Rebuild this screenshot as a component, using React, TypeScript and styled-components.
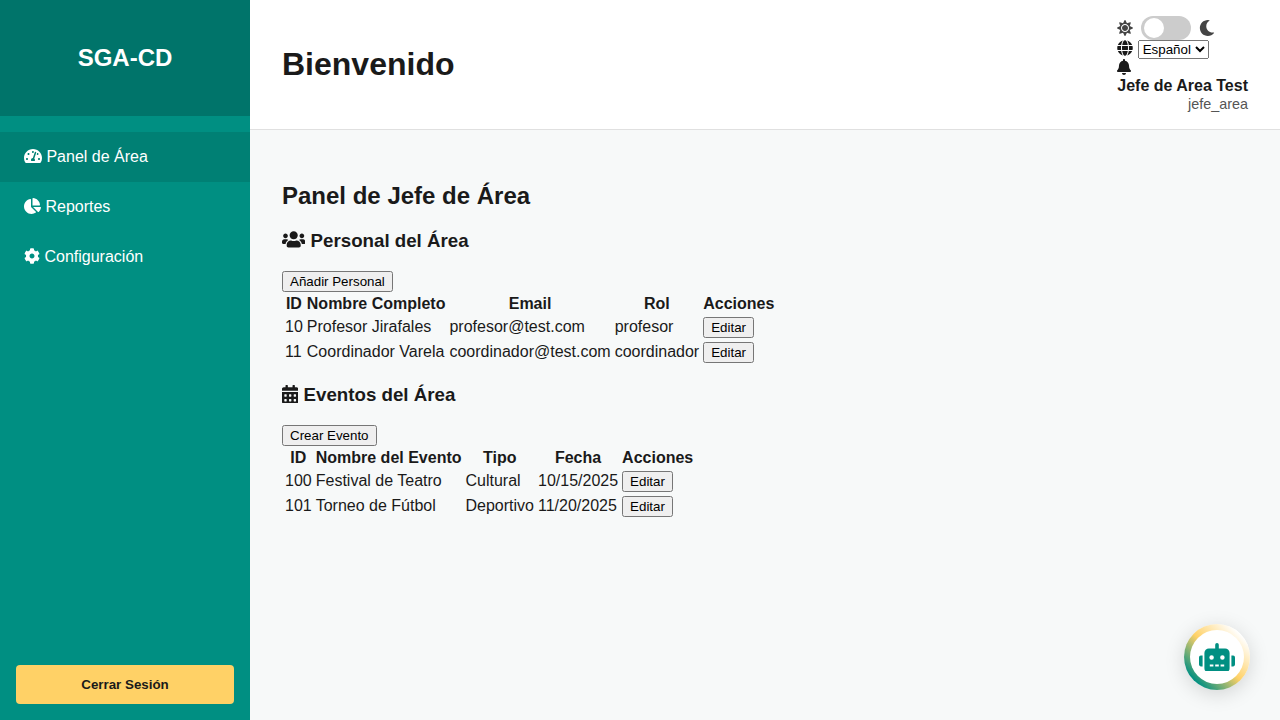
import React from 'react';
import styled, { createGlobalStyle } from 'styled-components';
import {
  FaBell,
  FaCalendarAlt,
  FaChartPie,
  FaCog,
  FaGlobe,
  FaMoon,
  FaRobot,
  FaSun,
  FaTachometerAlt,
  FaUsers,
} from 'react-icons/fa';

const GlobalStyle = createGlobalStyle`
  html, body {
    margin: 0;
    padding: 0;
    height: 100%;
  }
  body {
    font-family: "Liberation Sans", Arial, sans-serif;
    color: #1a1a1a;
    background: #f7f9f9;
  }
`;

// react-icons draws every icon 1em square, these keep the glyph's real width
const GaugeIcon = styled(FaTachometerAlt)`
  width: 1.125em;
`;
const PieIcon = styled(FaChartPie)`
  width: 1.0625em;
`;
const UsersIcon = styled(FaUsers)`
  width: 1.25em;
`;
const CalendarIcon = styled(FaCalendarAlt)`
  width: 0.875em;
`;
const BellIcon = styled(FaBell)`
  width: 0.875em;
`;
const RobotIcon = styled(FaRobot)`
  width: 1.25em;
`;

const Layout = styled.div`
  display: flex;
  height: 720px;
  overflow: hidden;
`;

const Sidebar = styled.aside`
  width: 250px;
  flex-shrink: 0;
  display: flex;
  flex-direction: column;
  background: #008f82;
  color: #fff;
`;

const Brand = styled.div`
  height: 116px;
  box-sizing: border-box;
  padding-top: 44px;
  text-align: center;
  font-size: 24px;
  line-height: 28px;
  font-weight: 700;
  background: #00746a;
`;

const Nav = styled.nav`
  flex: 1;
  padding-top: 16px;
`;

const NavItem = styled.a<{ $active?: boolean }>`
  display: block;
  height: 50px;
  padding-left: 24px;
  font-size: 16px;
  line-height: 50px;
  color: #fff;
  background: ${(p) => (p.$active ? 'rgba(0, 0, 0, 0.1)' : 'transparent')};
  svg {
    vertical-align: -2px;
  }
`;

const LogoutWrap = styled.div`
  padding: 0 16px 16px;
`;

const LogoutButton = styled.button`
  display: block;
  width: 100%;
  height: 39px;
  border: none;
  border-radius: 4px;
  background: #ffd166;
  color: #1a1a1a;
  font-family: inherit;
  font-size: 13.33px;
  font-weight: 700;
`;

const Content = styled.div`
  flex: 1;
  display: flex;
  flex-direction: column;
  min-width: 0;
`;

const Topbar = styled.header`
  height: 130px;
  box-sizing: border-box;
  display: flex;
  align-items: center;
  justify-content: space-between;
  padding: 0 32px;
  background: #fff;
  border-bottom: 1px solid #e0e0e0;
`;

const PageTitle = styled.h1`
  margin: 0;
  font-size: 32px;
  font-weight: 700;
`;

const UserArea = styled.div`
  display: flex;
  flex-direction: column;
`;

const ThemeRow = styled.div`
  display: flex;
  align-items: center;
  gap: 8px;
  height: 24px;
  font-size: 16px;
  color: #444;
`;

const Toggle = styled.span`
  display: block;
  width: 50px;
  height: 24px;
  border-radius: 12px;
  background: #ccc;
  position: relative;
  &::before {
    content: '';
    position: absolute;
    left: 3px;
    top: 2px;
    width: 20px;
    height: 20px;
    border-radius: 50%;
    background: #fff;
  }
`;

const LangRow = styled.div`
  height: 19px;
  font-size: 16px;
  line-height: 17px;
  white-space: nowrap;
  svg {
    vertical-align: -2px;
  }
`;

const BellRow = styled.div`
  height: 18px;
  font-size: 16px;
  line-height: 18px;
  svg {
    display: block;
  }
`;

const UserName = styled.div`
  font-weight: 700;
  font-size: 16px;
  line-height: 18px;
`;

const UserRole = styled.div`
  text-align: right;
  font-size: 14.4px;
  line-height: 18px;
  color: #555;
`;

const Main = styled.main`
  flex: 1;
  padding: 32px;
`;

const PanelTitle = styled.h2`
  margin: 19.92px 0;
  font-size: 24px;
`;

const SectionTitle = styled.h3`
  margin: 18.72px 0;
  font-size: 18.72px;
  svg {
    vertical-align: -2px;
  }
`;

const Section = styled.section``;

const Table = styled.table`
  font-size: 16px;
`;

const Cell = styled.td`
  vertical-align: middle;
`;

const Head = styled.th``;

function DataTable({
  columns,
  rows,
}: {
  columns: string[];
  rows: string[][];
}) {
  return (
    <Table>
      <thead>
        <tr>
          {columns.map((c) => (
            <Head key={c}>{c}</Head>
          ))}
        </tr>
      </thead>
      <tbody>
        {rows.map((row) => (
          <tr key={row[0]}>
            {row.map((v) => (
              <Cell key={v}>{v}</Cell>
            ))}
            <Cell>
              <button>Editar</button>
            </Cell>
          </tr>
        ))}
      </tbody>
    </Table>
  );
}

const ChatButton = styled.button`
  position: fixed;
  right: 30px;
  bottom: 30px;
  width: 66px;
  height: 66px;
  padding: 0;
  border: none;
  border-radius: 50%;
  background: linear-gradient(45deg, #008f82 15%, #ffd166 50%, #fff 85%);
  box-shadow: 0 4px 20px rgba(0, 0, 0, 0.15);
  display: flex;
  align-items: center;
  justify-content: center;
`;

const ChatInner = styled.span`
  width: 54px;
  height: 54px;
  border-radius: 50%;
  background: #fff;
  color: #008f82;
  font-size: 28.8px;
  display: flex;
  align-items: center;
  justify-content: center;
`;

export default function App() {
  return (
    <>
      <GlobalStyle />
      <Layout>
        <Sidebar>
          <Brand>SGA-CD</Brand>
          <Nav>
            <NavItem $active>
              <GaugeIcon /> Panel de Área
            </NavItem>
            <NavItem>
              <PieIcon /> Reportes
            </NavItem>
            <NavItem>
              <FaCog /> Configuración
            </NavItem>
          </Nav>
          <LogoutWrap>
            <LogoutButton>Cerrar Sesión</LogoutButton>
          </LogoutWrap>
        </Sidebar>
        <Content>
          <Topbar>
            <PageTitle>Bienvenido</PageTitle>
            <UserArea>
              <ThemeRow>
                <FaSun />
                <Toggle />
                <FaMoon />
              </ThemeRow>
              <LangRow>
                <FaGlobe />{' '}
                <select defaultValue="es">
                  <option value="es">Español</option>
                </select>
              </LangRow>
              <BellRow>
                <BellIcon />
              </BellRow>
              <UserName>Jefe de Area Test</UserName>
              <UserRole>jefe_area</UserRole>
            </UserArea>
          </Topbar>
          <Main>
            <PanelTitle>Panel de Jefe de Área</PanelTitle>
            <Section>
              <SectionTitle>
                <UsersIcon /> Personal del Área
              </SectionTitle>
              <button>Añadir Personal</button>
              <DataTable
                columns={['ID', 'Nombre Completo', 'Email', 'Rol', 'Acciones']}
                rows={[
                  ['10', 'Profesor Jirafales', 'profesor@test.com', 'profesor'],
                  ['11', 'Coordinador Varela', 'coordinador@test.com', 'coordinador'],
                ]}
              />
            </Section>
            <Section>
              <SectionTitle>
                <CalendarIcon /> Eventos del Área
              </SectionTitle>
              <button>Crear Evento</button>
              <DataTable
                columns={['ID', 'Nombre del Evento', 'Tipo', 'Fecha', 'Acciones']}
                rows={[
                  ['100', 'Festival de Teatro', 'Cultural', '10/15/2025'],
                  ['101', 'Torneo de Fútbol', 'Deportivo', '11/20/2025'],
                ]}
              />
            </Section>
          </Main>
        </Content>
      </Layout>
      <ChatButton>
        <ChatInner>
          <RobotIcon />
        </ChatInner>
      </ChatButton>
    </>
  );
}
